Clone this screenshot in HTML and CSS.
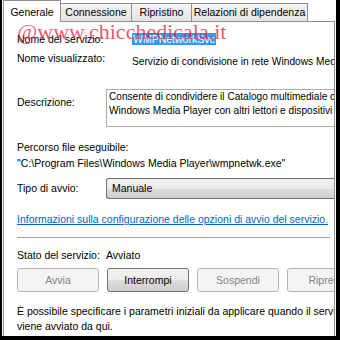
FILE: index.html
```html
<!DOCTYPE html>
<html lang="it">
<head>
<meta charset="utf-8">
<title>Proprietà servizio</title>
<link rel="stylesheet" href="styles.css">
</head>
<body>
<div class="window">
  <div class="tabs">
    <div class="tab sel t1">Generale</div>
    <div class="tab t2">Connessione</div>
    <div class="tab t3">Ripristino</div>
    <div class="tab t4">Relazioni di dipendenza</div>
  </div>
  <div class="panel">
    <div class="row r-name">
      <span class="lbl wide">Nome del servizio:</span>
      <span class="val"><span class="hl">WMPNetworkSvc</span></span>
    </div>
    <div class="row r-disp">
      <span class="lbl wide">Nome visualizzato:</span>
      <span class="val low">Servizio di condivisione in rete Windows Media Player</span>
    </div>
    <div class="row r-desc">
      <span class="lbl">Descrizione:</span>
      <div class="textbox">Consente di condividere il Catalogo multimediale di<br>Windows Media Player con altri lettori e dispositivi</div>
    </div>
    <div class="path">
      <div>Percorso file eseguibile:</div>
      <div>"C:\Program Files\Windows Media Player\wmpnetwk.exe"</div>
    </div>
    <div class="row r-type">
      <span class="lbl">Tipo di avvio:</span>
      <div class="combo">Manuale</div>
    </div>
    <div class="link">Informazioni sulla configurazione delle opzioni di avvio del servizio.</div>
    <div class="sep"></div>
    <div class="row r-state">
      <span class="lbl">Stato del servizio:</span>
      <span class="val">Avviato</span>
    </div>
    <div class="buttons">
      <div class="btn dis">Avvia</div>
      <div class="btn">Interrompi</div>
      <div class="btn dis">Sospendi</div>
      <div class="btn dis">Riprendi</div>
    </div>
    <div class="note">È possibile specificare i parametri iniziali da applicare quando il servizio<br>viene avviato da qui.</div>
  </div>
  <div class="watermark">@www.chicchedicala.it</div>
</div>
</body>
</html>
```
FILE: styles.css
```css
html, body {
  margin: 0;
  padding: 0;
  background: #000;
  width: 340px;
  height: 340px;
  overflow: hidden;
}
.window {
  position: relative;
  margin-left: 2px;
  width: 334px;
  height: 336px;
  background: #fff;
  overflow: hidden;
  font-family: "Liberation Sans", Arial, sans-serif;
  font-size: 10.5px;
  color: #000;
}
.tabs {
  display: flex;
  align-items: flex-end;
  height: 21px;
  padding-left: 1px;
  position: relative;
  z-index: 2;
}
.tab {
  box-sizing: border-box;
  height: 18px;
  border: 1px solid #8e8f8f;
  border-bottom: none;
  margin-left: -1px;
  background: linear-gradient(#f3f3f3, #e4e4e4);
  text-align: center;
  line-height: 16px;
  white-space: nowrap;
}
.tab.sel {
  height: 22px;
  margin-bottom: -1px;
  background: #fff;
  margin-left: 0;
  line-height: 22px;
  position: relative;
  z-index: 3;
}
.t1 { width: 58px; }
.t2 { width: 72px; }
.t3 { width: 61px; }
.t4 { width: 117px; }
.panel {
  box-sizing: border-box;
  margin-left: 1px;
  width: 332px;
  height: 330px;
  border: 1px solid #8e8f8f;
  padding: 10px 0 0 13px;
  overflow: hidden;
  white-space: nowrap;
}
.row {
  display: flex;
  line-height: 15px;
}
.lbl {
  flex: none;
  width: 89px;
}
.lbl.wide { width: 115px; }
.r-name { height: 19px; }
.hl {
  background: #3399ff;
  color: #fff;
  padding: 0 1px;
}
.val.low {
  padding-top: 3px;
  font-size: 10.2px;
}
.r-desc {
  margin-top: 20px;
  align-items: flex-start;
}
.r-desc .lbl { padding-top: 6px; }
.textbox {
  box-sizing: border-box;
  height: 38px;
  width: 260px;
  border: 1px solid #abadb3;
  border-right: none;
  padding: 0 0 0 2px;
  line-height: 14px;
  font-size: 10.1px;
  overflow: hidden;
}
.path {
  margin-top: 12px;
  line-height: 16px;
}
.r-type {
  margin-top: 7px;
  align-items: center;
}
.combo {
  box-sizing: border-box;
  height: 21px;
  width: 260px;
  border: 1px solid #707070;
  border-right: none;
  border-radius: 3px 0 0 3px;
  background: linear-gradient(#f2f2f2 0%, #ebebeb 50%, #dddddd 51%, #cfcfcf 100%);
  padding-left: 5px;
  line-height: 19px;
}
.link {
  margin-top: 13px;
  line-height: 15px;
  color: #0066cc;
  text-decoration: underline;
}
.sep {
  margin-top: 10px;
  height: 1px;
  background: #a0a0a0;
  margin-right: 4px;
}
.r-state { margin-top: 10px; }
.buttons {
  display: flex;
  gap: 8px;
  margin-top: 5px;
}
.btn {
  flex: none;
  box-sizing: border-box;
  width: 82px;
  height: 24px;
  border: 1px solid #707070;
  border-radius: 3px;
  background: linear-gradient(#f2f2f2 0%, #ebebeb 50%, #dddddd 51%, #cfcfcf 100%);
  text-align: center;
  line-height: 22px;
}
.btn.dis {
  border-color: #adb2b5;
  background: #f4f4f4;
  color: #838383;
}
.note {
  margin-top: 12px;
  line-height: 15px;
}
.watermark {
  position: absolute;
  left: 15px;
  top: 21px;
  font-family: "Liberation Serif", "Times New Roman", serif;
  font-size: 22px;
  line-height: 22px;
  color: rgba(225, 35, 55, 0.75);
  white-space: nowrap;
  z-index: 5;
}
```
